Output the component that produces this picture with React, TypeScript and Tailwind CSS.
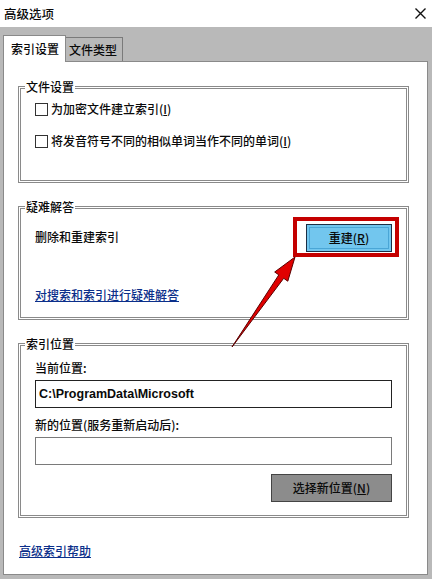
import React from "react";

function Checkbox() {
  return <span className="w-[13px] h-[13px] border border-[#333333] bg-white shrink-0" />;
}

export default function App() {
  return (
    <div className="relative w-[432px] h-[579px] overflow-hidden bg-[#b9b9b9] text-[12px] leading-[16px] text-[#0a0a0a] font-medium font-['Noto_Sans_CJK_SC','Liberation_Sans',sans-serif]">
      {/* title bar */}
      <div className="h-[27px] bg-white flex items-center justify-between pl-[4px] pr-[4px]">
        <span className="text-[12.5px]">高级选项</span>
        <svg width="11" height="11" viewBox="0 0 11 11" className="mr-[2px]">
          <path d="M0.5 0.5 L10.5 10.5 M10.5 0.5 L0.5 10.5" stroke="#111" strokeWidth="1.4" />
        </svg>
      </div>

      {/* tabs */}
      <div className="pt-[7px] pl-[3px] flex items-end h-[34px]">
        <div className="relative z-10 w-[63px] h-[27px] bg-white border border-b-0 border-[#8a8a8a] flex items-center pl-[7px] -mb-px">
          索引设置
        </div>
        <div className="w-[57px] h-[24px] bg-[#b9b9b9] border border-l-0 border-b-0 border-[#7a7a7a] flex items-center pl-[3px]">
          文件类型
        </div>
      </div>

      {/* panel */}
      <div className="ml-[3px] mr-[4px] h-[514px] bg-white border border-[#8a8a8a] flex flex-col">
        {/* group 1 */}
        <fieldset className="mt-[17px] ml-[14px] w-[391px] border-[3px] border-double border-[#8a8a8a] pl-[14px] pr-[7px] pt-[6px] pb-[31px]">
          <legend className="-ml-[10px] px-[1px] leading-[16px]">文件设置</legend>
          <div className="flex items-center gap-[3px] h-[16px]">
            <Checkbox />
            <span>为加密文件建立索引(<span className="underline">I</span>)</span>
          </div>
          <div className="flex items-center gap-[3px] h-[16px] mt-[16px]">
            <Checkbox />
            <span>将发音符号不同的相似单词当作不同的单词(<span className="underline">I</span>)</span>
          </div>
        </fieldset>

        {/* group 2 */}
        <fieldset className="mt-[16px] ml-[14px] w-[391px] border-[3px] border-double border-[#8a8a8a] pl-[14px] pr-[7px] pt-[1px] pb-[14px]">
          <legend className="-ml-[10px] px-[1px] leading-[16px]">疑难解答</legend>
          <div className="flex items-center justify-between h-[41px]">
            <span>删除和重建索引</span>
            <div className="border-[4px] border-[#c40000] pl-[9px] pr-[3px] pt-[3px] pb-[1px]">
              <div className="w-[86px] h-[28px] bg-[#72c6ee] border border-[#1b2f45] p-[2px]">
                <div className="w-full h-full border border-[#4aa6d6] flex items-center justify-center">
                  重建(<span className="underline">R</span>)
                </div>
              </div>
            </div>
          </div>
          <div className="mt-[30px] h-[16px]">
            <span className="underline text-[#0b2f8a]">对搜索和索引进行疑难解答</span>
          </div>
        </fieldset>

        {/* group 3 */}
        <fieldset className="mt-[16px] ml-[14px] w-[391px] border-[3px] border-double border-[#8a8a8a] pl-[14px] pr-[14px] pt-[8px] pb-[13px] flex flex-col">
          <legend className="-ml-[10px] px-[1px] leading-[16px]">索引位置</legend>
          <div className="h-[16px]">当前位置:</div>
          <div className="mt-[4px] h-[28px] border border-[#222222] flex items-center pl-[3px] font-['Liberation_Sans',sans-serif] font-bold text-[12.5px]">
            C:\ProgramData\Microsoft
          </div>
          <div className="mt-[9px] h-[16px]">新的位置(服务重新启动后):</div>
          <div className="mt-[4px] h-[28px] border border-[#7a7a7a]" />
          <div className="mt-[9px] self-end w-[121px] h-[28px] bg-[#8c8c8c] border border-[#444444] flex items-center justify-center">
            选择新位置(<span className="underline">N</span>)
          </div>
        </fieldset>

        <div className="mt-[25px] ml-[15px] h-[16px]">
          <span className="underline text-[#0b2f8a]">高级索引帮助</span>
        </div>
      </div>

      {/* annotation arrow */}
      <svg className="absolute left-0 top-0 pointer-events-none" width="432" height="579" viewBox="0 0 432 579">
        <polygon
          points="232,347 278.8,274.9 274.7,272 295,257 287.8,281.2 283.7,278.3"
          fill="#e00000"
          stroke="#5a0000"
          strokeWidth="1"
          strokeLinejoin="round"
        />
      </svg>
    </div>
  );
}
